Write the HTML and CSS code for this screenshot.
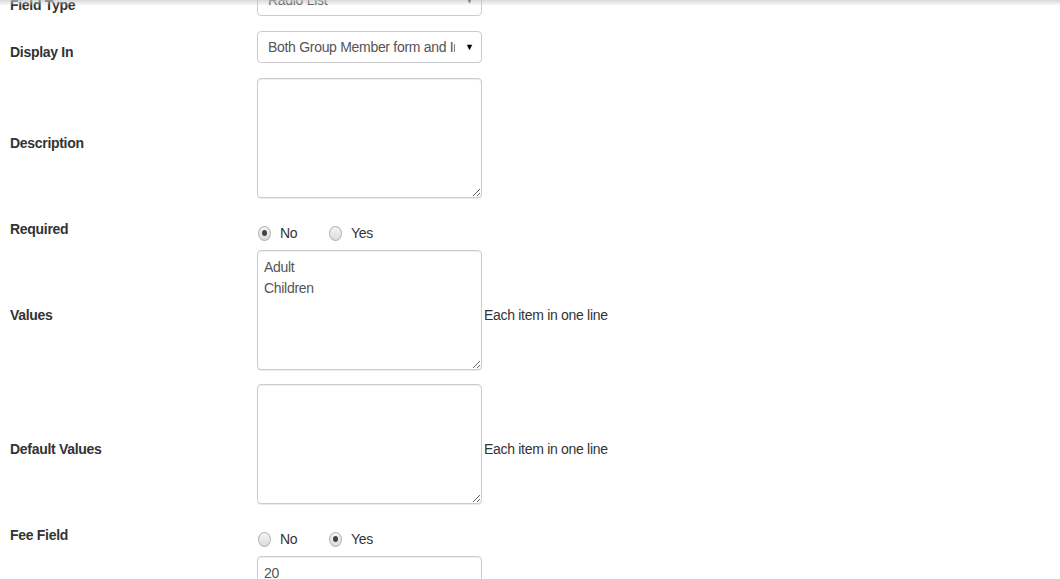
FILE: index.html
```html
<!DOCTYPE html>
<html lang="en">
<head>
  <meta charset="UTF-8" />
  <title>Edit Field</title>
  <link rel="stylesheet" href="styles.css">
</head>
<body>

  <!-- header shadow -->
  <div class="top-shadow"></div>

  <form class="field-form">
    <div class="form-row">
      <label class="form-label">Field Type</label>
      <div class="select-box">
        <select><option>Radio List</option></select>
        <span class="caret">&#9660;</span>
      </div>
    </div>

    <div class="form-row">
      <label class="form-label">Display In</label>
      <div class="select-box">
        <select><option>Both Group Member form and Individual form</option></select>
        <span class="caret">&#9660;</span>
      </div>
    </div>

    <div class="form-row">
      <label class="form-label">Description</label>
      <textarea class="text-box"></textarea>
    </div>

    <div class="form-row radio-row">
      <label class="form-label">Required</label>
      <div class="radio-group">
        <span class="radio-item"><span class="radio checked"></span>No</span>
        <span class="radio-item"><span class="radio"></span>Yes</span>
      </div>
    </div>

    <div class="form-row">
      <label class="form-label">Values</label>
      <textarea class="text-box">Adult
Children</textarea>
      <span class="help-text">Each item in one line</span>
    </div>

    <div class="form-row row-tight">
      <label class="form-label">Default Values</label>
      <textarea class="text-box"></textarea>
      <span class="help-text">Each item in one line</span>
    </div>

    <div class="form-row radio-row">
      <label class="form-label">Fee Field</label>
      <div class="radio-group">
        <span class="radio-item"><span class="radio"></span>No</span>
        <span class="radio-item"><span class="radio checked"></span>Yes</span>
      </div>
    </div>

    <div class="form-row">
      <label class="form-label"></label>
      <input type="text" class="text-input" value="20">
    </div>
  </form>

</body>
</html>
```

FILE: styles.css
```css
body {
  font-family: "Liberation Sans", Arial, sans-serif;
  font-size: 14px;
  letter-spacing: -0.3px;
  line-height: 22px;
  color: #333;
  background-color: #fff;
  margin: 0;
  padding: 0;
  overflow: hidden;
}

.top-shadow {
  position: fixed;
  top: 0;
  left: 0;
  right: 0;
  height: 6px;
  background: linear-gradient(rgba(200,200,200,0.7), rgba(255,255,255,0));
  z-index: 10;
}

.field-form {
  display: flex;
  flex-direction: column;
  gap: 15px;
  margin-top: -16px;
}

.form-row {
  display: flex;
  align-items: center;
}

.row-tight {
  margin-top: -1px;
}

.form-label {
  width: 247px;
  padding-left: 10px;
  margin-top: 10px;
  font-weight: bold;
  color: #333;
  flex-shrink: 0;
}

/* select */
.select-box {
  display: flex;
  align-items: center;
  width: 225px;
  height: 32px;
  box-sizing: border-box;
  border: 1px solid #ccc;
  border-radius: 4px;
  background-color: #fff;
  overflow: hidden;
}

.select-box select {
  flex: 1;
  min-width: 0;
  appearance: none;
  -webkit-appearance: none;
  border: none;
  outline: none;
  background: transparent;
  font-family: inherit;
  font-size: 14px;
  letter-spacing: -0.3px;
  color: #555;
  padding: 0 0 0 10px;
  margin-right: 10px;
  height: 30px;
}

.caret {
  font-size: 9px;
  color: #000;
  width: 16px;
  text-align: left;
  flex-shrink: 0;
}

/* textarea / input */
.text-box,
.text-input {
  width: 225px;
  box-sizing: border-box;
  border: 1px solid #ccc;
  border-radius: 4px;
  box-shadow: inset 0 1px 1px rgba(0,0,0,0.075), 0 1px 0 rgba(0,0,0,0.08);
  font-family: inherit;
  font-size: 14px;
  letter-spacing: -0.3px;
  line-height: 21px;
  color: #555;
  padding: 6px 6px;
  margin: 0;
  outline: none;
}

.text-box {
  height: 120px;
  resize: vertical;
}

.text-input {
  height: 34px;
}

.help-text {
  margin-left: 2px;
  margin-top: 10px;
  color: #333;
}

/* radios */
.radio-row {
  height: 22px;
}

.radio-group {
  display: flex;
  margin-top: 18px;
  color: #333;
}

.radio-item {
  display: flex;
  align-items: center;
  width: 71px;
}

.radio {
  width: 11px;
  height: 13px;
  border: 1px solid #b5b5b5;
  border-radius: 50%;
  background: linear-gradient(#f4f4f4, #dcdcdc);
  margin: 0 9px 0 1px;
  display: flex;
  align-items: center;
  justify-content: center;
}

.radio.checked::after {
  content: "";
  width: 5px;
  height: 6px;
  border-radius: 50%;
  background-color: #444;
}
```
